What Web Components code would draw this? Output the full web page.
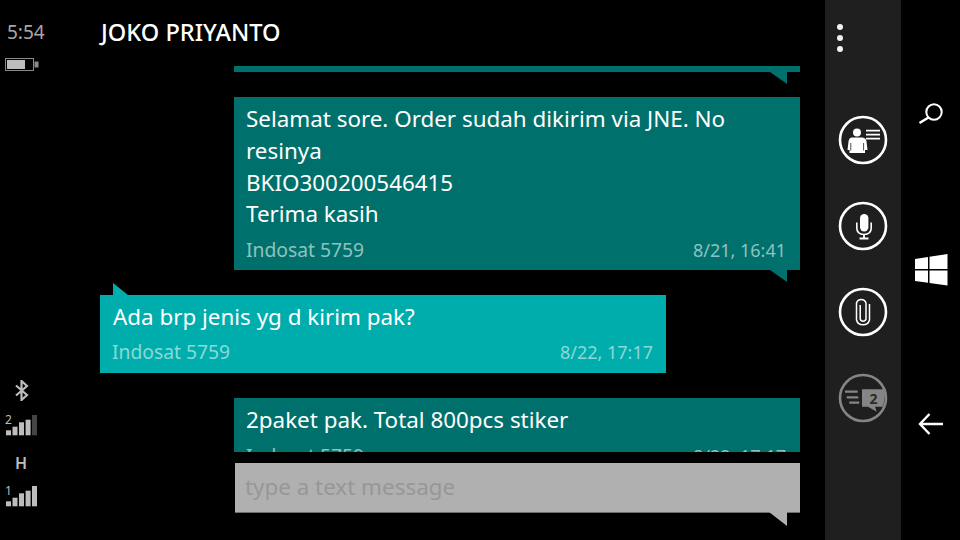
<!DOCTYPE html>
<html>
<head>
<meta charset="utf-8">
<title>Messaging</title>
<style>
  html, body { margin: 0; height: 100%; background: #000; }
  body { font-family: "Noto Sans", "Open Sans", sans-serif; }
</style>
</head>
<body>
<phone-screen>
  <status-rail slot="status"></status-rail>
  <chat-header slot="header">JOKO PRIYANTO</chat-header>
  <sms-bubble slot="thread" kind="out" stub></sms-bubble>
  <sms-bubble slot="thread" kind="out" from="Indosat 5759" when="8/21, 16:41">Selamat sore. Order sudah dikirim via JNE. No resinya<br>BKIO300200546415<br>Terima kasih</sms-bubble>
  <sms-bubble slot="thread" kind="in" from="Indosat 5759" when="8/22, 17:17">Ada brp jenis yg d kirim pak?</sms-bubble>
  <sms-bubble slot="thread" kind="out" from="Indosat 5759" when="8/22, 17:17">2paket pak. Total 800pcs stiker</sms-bubble>
  <sms-composer slot="composer" placeholder="type a text message"></sms-composer>
  <app-bar slot="appbar">
    <bar-button icon="contact"></bar-button>
    <bar-button icon="mic"></bar-button>
    <bar-button icon="clip"></bar-button>
    <bar-button icon="switch" dim></bar-button>
  </app-bar>
  <nav-rail slot="nav"></nav-rail>
</phone-screen>

<script>
(function () {
  const define = (name, css, html) => {
    class El extends HTMLElement {
      connectedCallback() {
        if (this.shadowRoot) return;
        const root = this.attachShadow({ mode: 'open' });
        root.innerHTML = `<style>${css}</style>${typeof html === 'function' ? html(this) : html}`;
      }
    }
    customElements.define(name, El);
  };

  define('phone-screen', `
    :host { display: grid; grid-template-columns: 100px 725px 76px 59px; width: 960px; height: 540px; background: #000; overflow: hidden; }
    .chat { display: flex; flex-direction: column; height: 540px; min-width: 0; }
    .thread { display: flex; flex-direction: column; gap: 25px; width: 700px; height: 386px; overflow: hidden; }
    .composer { margin-top: 11px; }
  `, `
    <slot name="status"></slot>
    <div class="chat">
      <slot name="header"></slot>
      <div class="thread"><slot name="thread"></slot></div>
      <div class="composer"><slot name="composer"></slot></div>
    </div>
    <slot name="appbar"></slot>
    <slot name="nav"></slot>
  `);

  const signal = (n, off) => {
    const tops = [14.3, 10.7, 6.3, 3.7, -1];
    const xs = [6, 12.5, 19, 25.6, 32];
    const bars = tops.map((t, i) => `<rect x="${xs[i]}" y="${t + 1}" width="5" height="${19.3 - t}" fill="${i === off ? '#444' : '#bdbdbd'}"/>`).join('');
    return `<div class="sig"><span class="n">${n}</span><svg width="40" height="22" viewBox="0 0 40 22">${bars}</svg></div>`;
  };

  define('status-rail', `
    :host { display: flex; flex-direction: column; justify-content: space-between; height: 540px; color: #a8a8a8; }
    .top { padding: 20px 0 0 7px; }
    .time { font-size: 19px; line-height: 24px; }
    .batt { display: block; margin: 14px 0 0 -2px; }
    .bottom { display: flex; flex-direction: column; align-items: flex-start; padding-bottom: 32px; }
    .bt { display: block; margin: 0 0 14px 15px; }
    .h { font-size: 16px; line-height: 20px; font-weight: 600; margin: 16px 0 13px 15px; color: #bdbdbd; }
    .sig { position: relative; width: 40px; height: 22px; }
    .n { position: absolute; left: 5px; top: -2px; font-size: 12px; line-height: 14px; color: #bdbdbd; }
    svg { display: block; }
  `, `
    <div class="top">
      <div class="time">5:54</div>
      <svg class="batt" width="34" height="14" viewBox="0 0 34 14">
        <rect x="0.5" y="0.5" width="28" height="12" fill="none" stroke="#8a8a8a"/>
        <rect x="2" y="2" width="18" height="9" fill="#bdbdbd"/>
        <rect x="29.5" y="3.5" width="4" height="6" fill="#8a8a8a"/>
      </svg>
    </div>
    <div class="bottom">
      <svg class="bt" width="14" height="21" viewBox="0 0 14 21"><path d="M1 5.5 L12 15 L6.5 20 V1 L12 6 L1 15.5" fill="none" stroke="#bdbdbd" stroke-width="2.2"/></svg>
      ${signal(2, 4)}
      <div class="h">H</div>
      ${signal(1, -1)}
    </div>
  `);

  define('chat-header', `
    :host { display: block; height: 66px; box-sizing: border-box; padding: 17px 0 0 1px; color: #fff; font-size: 23.6px; line-height: 30px; font-weight: 500; white-space: nowrap; }
  `, `<slot></slot>`);

  define('sms-bubble', `
    :host { display: block; position: relative; flex: none; box-sizing: border-box; width: 566px; color: #fff; }
    :host([kind="out"]) { margin-left: 134px; background: #00706c; --meta: #8fc2bf; --pad: 12px; --pad-r: 14px; --gap: 5px; --bot: 5px; }
    :host([kind="in"]) { margin-right: 134px; background: #00adad; --meta: #8ad9d6; --pad: 13px; --pad-r: 13px; --gap: 4px; --bot: 6px; }
    :host([stub]) { height: 6px; }
    .tail { position: absolute; width: 17px; height: 12px; background: inherit; }
    :host([kind="out"]) .tail { right: 13px; bottom: -12px; clip-path: polygon(0 0, 100% 0, 100% 100%); }
    :host([kind="in"]) .tail { left: 13px; top: -12px; width: 15px; clip-path: polygon(0 0, 100% 100%, 0 100%); }
    .body { padding: 6px var(--pad-r) var(--bot) var(--pad); }
    .msg { font-size: 22.4px; line-height: 31.75px; }
    .meta { display: flex; justify-content: space-between; margin-top: var(--gap); font-size: 19.3px; line-height: 30px; color: var(--meta); }
    .meta span + span { font-size: 18px; }
    :host([kind="in"]) .meta { margin-left: -1px; }
    :host([stub]) .body { display: none; }
  `, (el) => `
    <div class="body">
      <div class="msg"><slot></slot></div>
      <div class="meta"><span>${el.getAttribute('from') || ''}</span><span>${el.getAttribute('when') || ''}</span></div>
    </div>
    <div class="tail"></div>
  `);

  define('sms-composer', `
    :host { display: block; position: relative; box-sizing: border-box; width: 565px; height: 50px; margin-left: 135px; background: #b0b0b0; border-bottom: 1px solid #6e6e6e; }
    .ph { padding-left: 10px; font-size: 22.4px; line-height: 48px; color: #979797; }
    .tail { position: absolute; right: 13px; bottom: -14px; width: 18px; height: 14px; background: #b0b0b0; clip-path: polygon(0 0, 100% 0, 100% 100%); }
  `, (el) => `<div class="ph">${el.getAttribute('placeholder')}</div><div class="tail"></div>`);

  define('app-bar', `
    :host { display: block; height: 540px; box-sizing: border-box; background: #1f1f1f; padding-top: 24px; }
    .dots { display: flex; flex-direction: column; gap: 5px; margin-left: 12px; }
    .dots i { display: block; width: 6px; height: 6px; border-radius: 50%; background: #f2f2f2; }
    .btns { display: flex; flex-direction: column; align-items: center; gap: 36px; margin-top: 63px; }
  `, `
    <div class="dots"><i></i><i></i><i></i></div>
    <div class="btns"><slot></slot></div>
  `);

  const ICONS = {
    contact: `<circle cx="19" cy="17.5" r="4" fill="currentColor"/>
      <path d="M13.5 22.5 H24.5 Q28 23 28.5 26.5 L29.5 35 H27 V38 H11.5 V35 H9.5 L10.5 26.5 Q11 23 13.5 22.5 Z" fill="currentColor"/>
      <path d="M12.8 28 V35.5 M25.6 28 V35.5" stroke="#1f1f1f" stroke-width="0.8" fill="none"/>
      <path d="M28 15.7 H42 M28 19.7 H42 M28 23.7 H42" stroke="currentColor" stroke-width="1.7" fill="none"/>`,
    mic: `<rect x="22" y="13" width="8.4" height="17.5" rx="4.2" fill="currentColor"/>
      <path d="M18.8 21.5 V27 Q18.8 33.5 26 33.5 Q33.2 33.5 33.2 27 V21.5" fill="none" stroke="currentColor" stroke-width="1.6"/>
      <path d="M26 33.5 V37.5 M21.5 37.5 H30.5" fill="none" stroke="currentColor" stroke-width="1.8"/>`,
    clip: `<path d="M31.5 17 V33 A6.7 6.3 0 0 1 18.5 33 V16 A5 5 0 0 1 28 16 V32 A3 3 0 0 1 22.2 32 V18" fill="none" stroke="currentColor" stroke-width="1.5"/>`,
    switch: `<path d="M7 18.7 H19.7 M8.7 24.3 H20.3 M11.3 29.7 H21.3" stroke="currentColor" stroke-width="2.2" fill="none"/>
      <path d="M24 16.3 H47 Q47.5 25 45 33.7 H37 L38.7 38.8 L30 33.7 H24 Z" fill="currentColor"/>
      <text x="35.5" y="31" font-size="14" font-weight="700" text-anchor="middle" fill="#2a2a2a" font-family="Noto Sans, sans-serif">2</text>`
  };

  define('bar-button', `
    :host { display: block; width: 50px; height: 50px; color: #fff; }
    :host([dim]) { color: #858585; }
    svg { display: block; }
  `, (el) => `
    <svg width="50" height="50" viewBox="0 0 50 50">
      <circle cx="25" cy="25" r="23" fill="none" stroke="currentColor" stroke-width="2.6"/>
      ${ICONS[el.getAttribute('icon')]}
    </svg>
  `);

  define('nav-rail', `
    :host { display: flex; flex-direction: column; align-items: center; height: 540px; box-sizing: border-box; padding: 101px 0 0 1px; color: #fff; }
    svg { display: block; }
    .win { margin-top: 129px; }
    .back { margin-top: 127px; }
  `, `
    <svg width="26" height="24" viewBox="0 0 26 24"><circle cx="16" cy="11" r="7.7" fill="none" stroke="#fff" stroke-width="2"/><path d="M10.5 16.5 L1.5 22" stroke="#fff" stroke-width="2.6" fill="none"/></svg>
    <svg class="win" width="33" height="32" viewBox="0 0 33 32"><path d="M0 5 L13 3 V15 H0 Z M14.5 2.8 L32.5 0 V15 H14.5 Z M0 16.5 H13 V28.7 L0 27 Z M14.5 16.5 H32.5 V31.5 L14.5 29 Z" fill="#fff"/></svg>
    <svg class="back" width="26" height="22" viewBox="0 0 26 22"><path d="M25 11 H3 M11.5 1 L2 11 L11.5 21" fill="none" stroke="#fff" stroke-width="2.4"/></svg>
  `);
})();
</script>
</body>
</html>
